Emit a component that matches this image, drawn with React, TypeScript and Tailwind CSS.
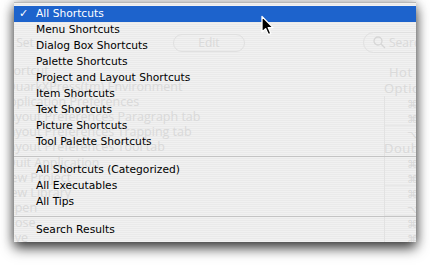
import React from "react";

type Item = { label: string; checked?: boolean };

const groups: Item[][] = [
  [
    { label: "All Shortcuts", checked: true },
    { label: "Menu Shortcuts" },
    { label: "Dialog Box Shortcuts" },
    { label: "Palette Shortcuts" },
    { label: "Project and Layout Shortcuts" },
    { label: "Item Shortcuts" },
    { label: "Text Shortcuts" },
    { label: "Picture Shortcuts" },
    { label: "Tool Palette Shortcuts" },
  ],
  [
    { label: "All Shortcuts (Categorized)" },
    { label: "All Executables" },
    { label: "All Tips" },
  ],
  [{ label: "Search Results" }],
];

const bgList: { t: string; x: number }[] = [
  { t: "Shortcut", x: -15 },
  { t: "QuarkXPress(tm) Environment", x: -8 },
  { t: "Application Preferences", x: -13 },
  { t: "Layout Preferences Paragraph tab", x: -12 },
  { t: "Layout Preferences Trapping tab", x: -12 },
  { t: "Layout Preferences Tool tab", x: -12 },
  { t: "Quit Application", x: -8 },
  { t: "New Project", x: -13 },
  { t: "New Library", x: -13 },
  { t: "Open", x: -9 },
  { t: "Close", x: -10 },
  { t: "Save", x: -13 },
];

const tableRows = ["⌘Q", "⌘N", "⌥⌘N", "", "⌘O", "⌘W", "⌘S", "⌥⌘S", "⌘P", "⌘E"];

function BackgroundWindow() {
  return (
    <div className="absolute inset-0 flex flex-col text-[12px] text-[#d9d9d9] font-['Open_Sans','DejaVu_Sans',sans-serif]">
      {/* toolbar row */}
      <div className="mt-[28px] h-[23px] flex items-center shrink-0">
        <div className="ml-[-26px] w-[47px] shrink-0 whitespace-nowrap leading-[16px]">New Set</div>
        <div className="ml-[138px] w-[72px] h-[18px] shrink-0 rounded-full border border-[#e0e0e0] flex items-center justify-center leading-[16px]">
          Edit
        </div>
        <div className="ml-[118px] w-[90px] h-[21px] shrink-0 rounded-full border border-[#e0e0e0] flex items-center gap-[3px] pl-[9px] leading-[16px]">
          <svg width="13" height="13" viewBox="0 0 13 13" fill="none" stroke="#d6d6d6" strokeWidth="1.3">
            <circle cx="5" cy="5" r="4" />
            <path d="M8 8 L12 12" />
          </svg>
          <span>Search</span>
        </div>
      </div>
      {/* body */}
      <div className="mt-[7px] flex flex-1">
        <div className="w-[370px] shrink-0 pt-[2.4px] flex flex-col">
          {bgList.map((b, i) => (
            <div
              key={i}
              className="h-[15.2px] leading-[15.2px] whitespace-nowrap text-[12.5px]"
              style={{ marginLeft: b.x }}
            >
              {b.t}
            </div>
          ))}
        </div>
        <div className="w-[70px] shrink-0 flex flex-col pt-[4px] text-[13px] tracking-[0.5px]">
          <div className="h-[15px] leading-[15px] pl-[5px] whitespace-nowrap">Hot Keys</div>
          <div className="h-[16px] leading-[16px] whitespace-nowrap">Option</div>
          <div className="flex-1 flex flex-col border-l border-[#e2e2e2]">
            {tableRows.map((r, i) =>
              r === "" ? (
                <div key={i} className="h-[15px] leading-[15px] -ml-px whitespace-nowrap">
                  Double
                </div>
              ) : (
                <div
                  key={i}
                  className="h-[15px] leading-[15px] border-b border-[#e8e8e8] pl-[22px] text-[11px] tracking-normal whitespace-nowrap"
                >
                  {r}
                </div>
              )
            )}
          </div>
        </div>
      </div>
    </div>
  );
}

function Cursor() {
  return (
    <svg
      className="absolute left-[260px] top-[15px]"
      width="16"
      height="22"
      viewBox="0 0 16 22"
    >
      <path
        d="M2 1.5 L2 17 L5.6 13.6 L8.3 19.6 L10.8 18.5 L8.2 12.6 L13 12.6 Z"
        fill="#000"
        stroke="#fff"
        strokeWidth="1.3"
        strokeLinejoin="round"
      />
    </svg>
  );
}

export default function App() {
  return (
    <div className="relative w-[430px] h-[265px] bg-white overflow-hidden pl-[14px] pt-[2px] font-['DejaVu_Sans',sans-serif]">
      <div className="relative w-[402px] h-[240px] shadow-[0_6px_12px_rgba(0,0,0,0.75),0_0_10px_rgba(0,0,0,0.22)] border-t border-[#b9b9b9] bg-[image:repeating-linear-gradient(180deg,#f1f1f1_0px,#f1f1f1_1px,#eaeaea_1px,#eaeaea_2px)]">
        <div className="absolute inset-0 overflow-hidden">
          <BackgroundWindow />
        </div>
        <div className="relative flex flex-col pt-[3px] text-[10.7px] text-black">
          {groups.map((g, gi) => (
            <React.Fragment key={gi}>
              {gi > 0 && (
                <div className="h-[12px] flex items-center">
                  <div className="w-full h-px bg-[#c4c4c4]" />
                </div>
              )}
              {g.map((it) => (
                <div
                  key={it.label}
                  className={
                    it.checked
                      ? "h-[16px] flex items-center bg-[#1d63cc] text-white"
                      : "h-[16px] flex items-center"
                  }
                >
                  <div className="w-[22px] pl-[5px] leading-[16px] text-[11px]">
                    {it.checked ? "✓" : ""}
                  </div>
                  <div className="leading-[16px] whitespace-nowrap">{it.label}</div>
                </div>
              ))}
            </React.Fragment>
          ))}
        </div>
      </div>
      <Cursor />
    </div>
  );
}
